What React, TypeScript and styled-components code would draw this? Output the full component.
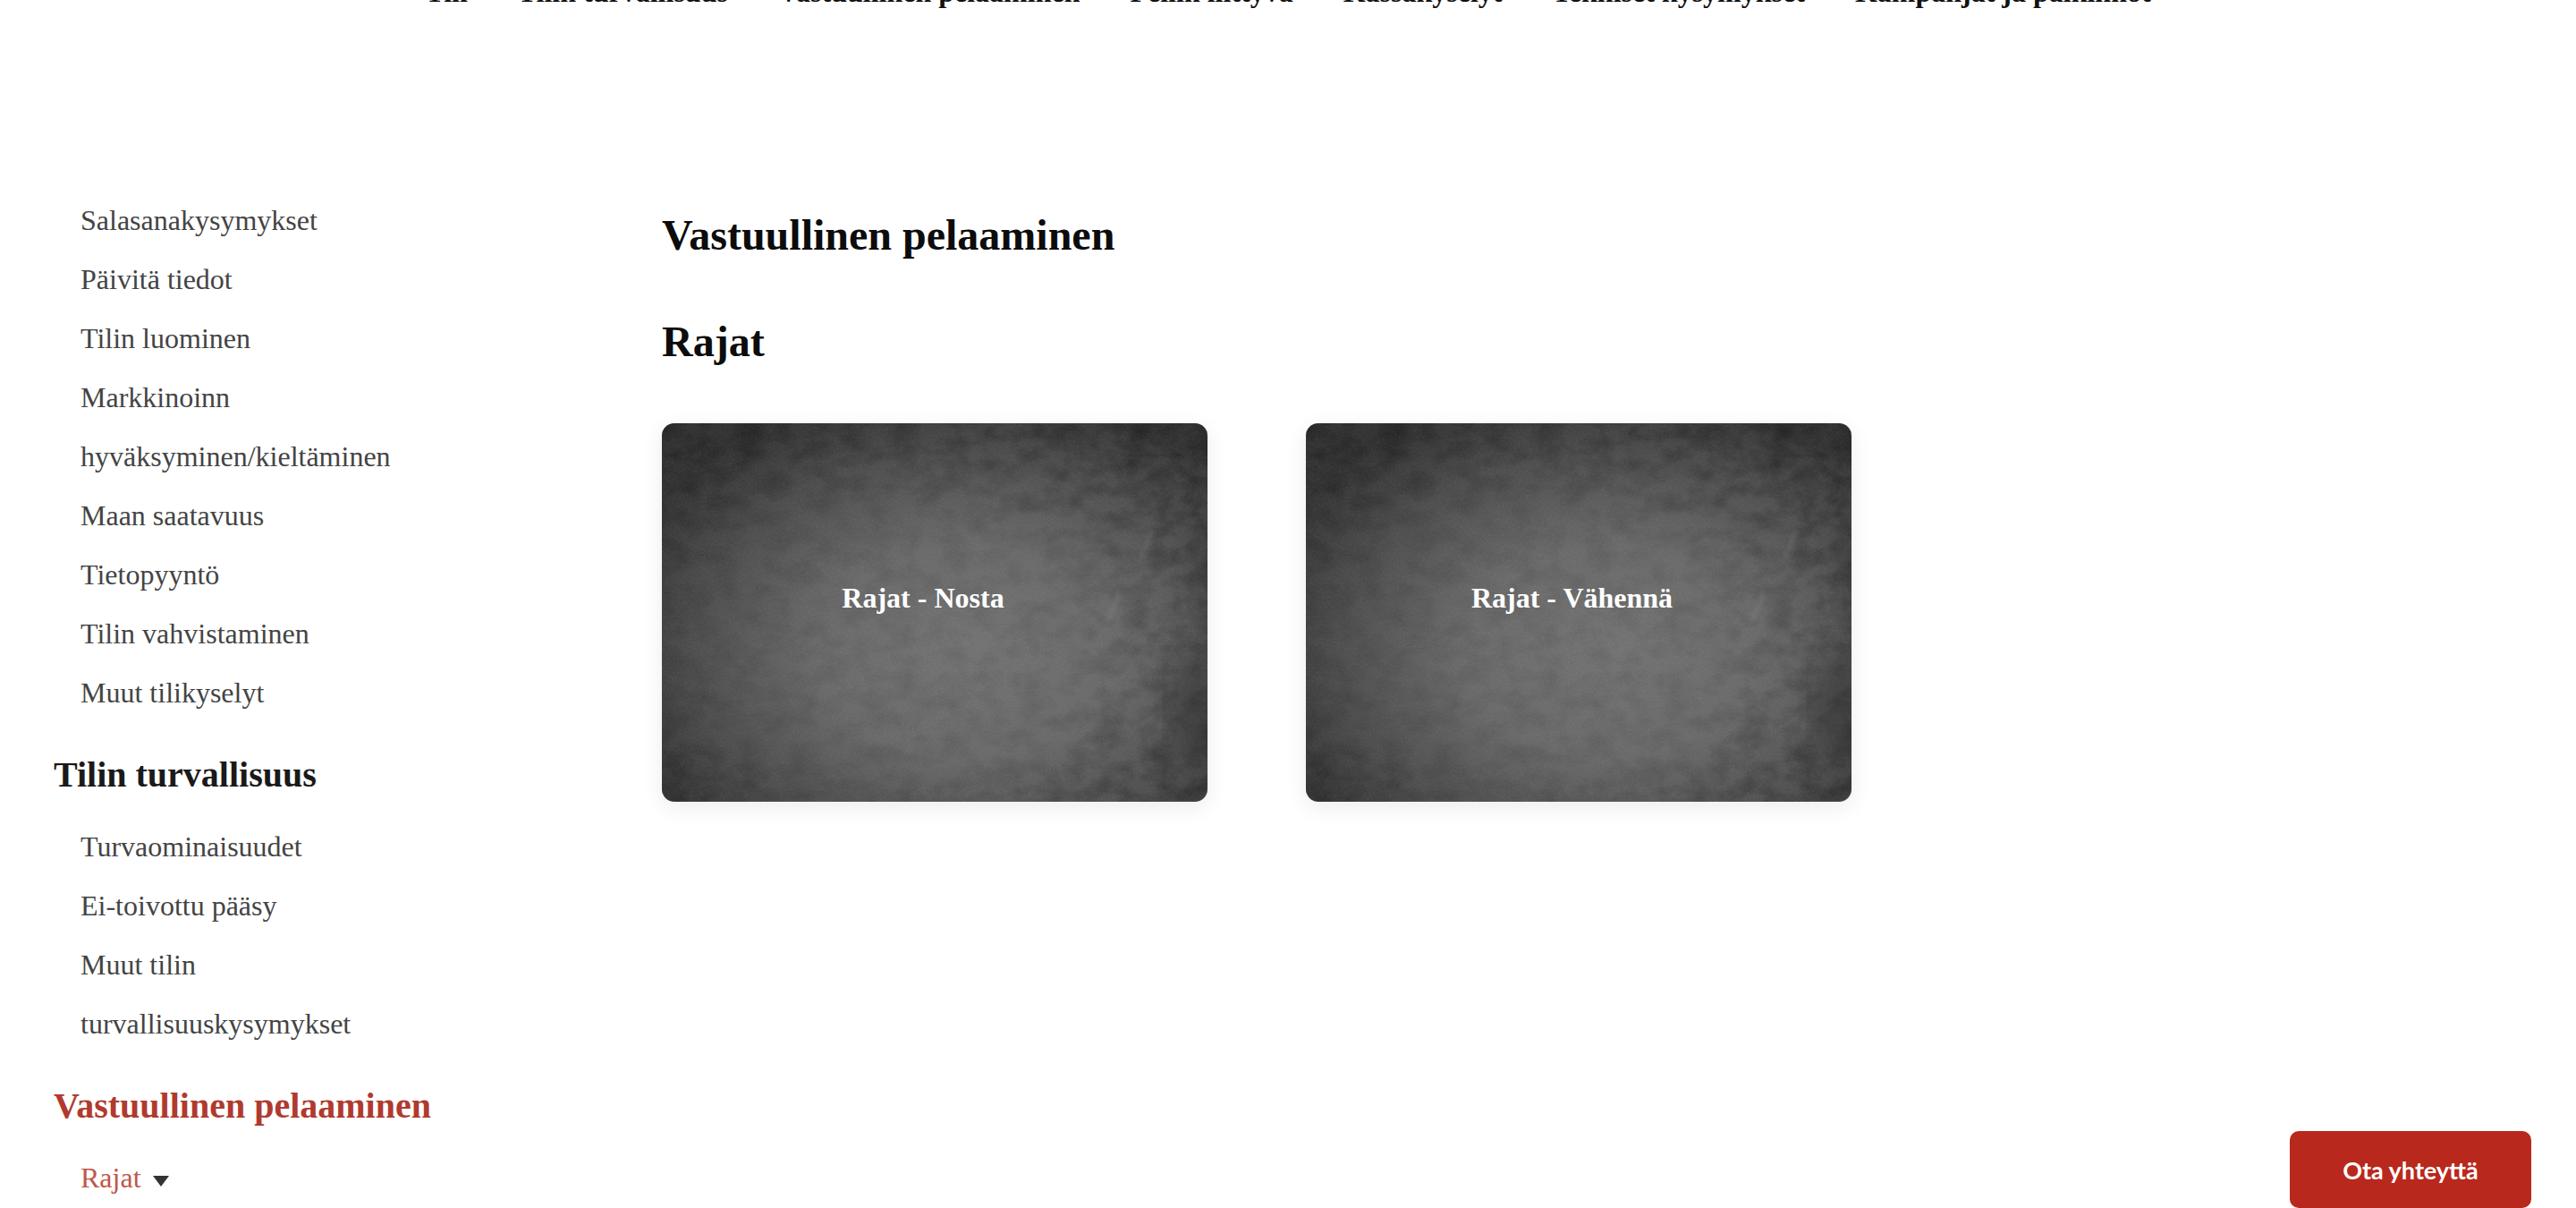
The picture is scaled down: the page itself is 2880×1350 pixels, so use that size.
import React from 'react';
import styled, { createGlobalStyle } from 'styled-components';

const navLinks = [
  'Tili',
  'Tilin turvallisuus',
  'Vastuullinen pelaaminen',
  'Peliin liittyvä',
  'Kassakyselyt',
  'Tekniset kysymykset',
  'Kampanjat ja palkinnot',
];

const accountLinks = [
  'Salasanakysymykset',
  'Päivitä tiedot',
  'Tilin luominen',
  'Markkinoinn hyväksyminen/kieltäminen',
  'Maan saatavuus',
  'Tietopyyntö',
  'Tilin vahvistaminen',
  'Muut tilikyselyt',
];

const securityLinks = ['Turvaominaisuudet', 'Ei-toivottu pääsy', 'Muut tilin turvallisuuskysymykset'];

const GlobalStyle = createGlobalStyle`
  html, body {
    margin: 0;
    padding: 0;
    background: #fff;
    overflow: hidden;
  }
  body {
    font-family: "Liberation Serif", "Times New Roman", serif;
  }
`;

const App: React.FC = () => (
  <Page>
    <GlobalStyle />
    <TopNav>
      {navLinks.map((link) => (
        <TopNavLink key={link}>{link}</TopNavLink>
      ))}
    </TopNav>
    <Content>
      <Sidebar>
        <SideList>
          {accountLinks.map((link) => (
            <SideItem key={link}>{link}</SideItem>
          ))}
        </SideList>
        <SideHeading>Tilin turvallisuus</SideHeading>
        <SideList>
          {securityLinks.map((link) => (
            <SideItem key={link}>{link}</SideItem>
          ))}
        </SideList>
        <SideHeading $active>Vastuullinen pelaaminen</SideHeading>
        <SideList>
          <SideItem $active>
            Rajat
            <Caret viewBox="0 0 20 14" aria-hidden="true">
              <path d="M1 1h18L10 13z" fill="#333" />
            </Caret>
          </SideItem>
        </SideList>
      </Sidebar>
      <Main>
        <Title>Vastuullinen pelaaminen</Title>
        <Subtitle>Rajat</Subtitle>
        <Cards>
          <Card $shift={26}>
            <Texture seed={4} />
            <CardLabel>Rajat - Nosta</CardLabel>
          </Card>
          <Card $shift={15}>
            <Texture seed={4} />
            <CardLabel>Rajat - Vähennä</CardLabel>
          </Card>
        </Cards>
      </Main>
    </Content>
    <ContactButton>Ota yhteyttä</ContactButton>
  </Page>
);

// mottled grey noise, heavier towards the worn top and right of the card photo
const Texture: React.FC<{ seed: number }> = ({ seed }) => (
  <TextureSvg viewBox="0 0 610 423" preserveAspectRatio="none" aria-hidden="true">
    <defs>
      <filter id={`mottle-${seed}`} x="0" y="0" width="100%" height="100%">
        <feTurbulence type="fractalNoise" baseFrequency="0.035 0.05" numOctaves="6" seed={seed} />
        <feColorMatrix values="0 0 0 0 0  0 0 0 0 0  0 0 0 0 0  1.6 0 0 0 -0.6" />
      </filter>
      <filter id={`grain-${seed}`} x="0" y="0" width="100%" height="100%">
        <feTurbulence type="fractalNoise" baseFrequency="0.45" numOctaves="3" seed={seed + 3} />
        <feColorMatrix values="0 0 0 0 1  0 0 0 0 1  0 0 0 0 1  0.9 0 0 0 -0.36" />
      </filter>
      <filter id={`soft-${seed}`}>
        <feGaussianBlur stdDeviation="14" />
      </filter>
      <filter id={`scratch-${seed}`}>
        <feGaussianBlur stdDeviation="2.5" />
      </filter>
      <radialGradient id={`edge-${seed}`} cx="40%" cy="58%" r="72%">
        <stop offset="50%" stopColor="#000" />
        <stop offset="100%" stopColor="#fff" />
      </radialGradient>
      <mask id={`edge-mask-${seed}`}>
        <rect width="610" height="423" fill={`url(#edge-${seed})`} />
      </mask>
    </defs>
    <rect width="610" height="423" filter={`url(#mottle-${seed})`} opacity="0.12" />
    <g mask={`url(#edge-mask-${seed})`}>
      <rect width="610" height="423" filter={`url(#mottle-${seed})`} opacity="0.32" />
    </g>
    <rect width="610" height="423" filter={`url(#grain-${seed})`} opacity="0.12" />
    <g fill="#2c2c2c" opacity="0.4" filter={`url(#soft-${seed})`}>
      <ellipse cx="600" cy="320" rx="34" ry="70" />
      <ellipse cx="610" cy="160" rx="14" ry="70" />
    </g>
    <g stroke="#8c8c8c" strokeWidth="5" fill="none" opacity="0.3" filter={`url(#scratch-${seed})`}>
      <path d="M512 190l-14 32" />
      <path d="M548 120l-12 30" />
    </g>
  </TextureSvg>
);

const Page = styled.div`
  height: 1350px;
  overflow: hidden;
`;

// the screenshot is scrolled, so only the feet of the nav labels show
const TopNav = styled.nav`
  display: flex;
  justify-content: center;
  gap: 56px;
  height: 37px;
  margin-top: -27px;
`;

const TopNavLink = styled.a`
  color: #111;
  font-size: 32px;
  font-weight: 700;
  line-height: 37px;
  white-space: nowrap;
`;

const Content = styled.div`
  display: grid;
  grid-template-columns: 740px 610px;
  padding-top: 203px;
`;

const Sidebar = styled.aside`
  padding-left: 60px;
`;

const SideList = styled.ul`
  list-style: none;
  margin: 0;
  padding: 0 0 0 30px;
  width: 420px;
`;

const SideItem = styled.li<{ $active?: boolean }>`
  color: ${(props) => (props.$active ? '#c0574c' : '#444')};
  font-size: 32px;
  line-height: 66px;
`;

const SideHeading = styled.h3<{ $active?: boolean }>`
  color: ${(props) => (props.$active ? '#b03a2e' : '#1a1a1a')};
  font-size: 40px;
  font-weight: 700;
  line-height: 46px;
  margin: 36px 0 24px;
  white-space: nowrap;
`;

const Caret = styled.svg`
  width: 20px;
  height: 14px;
  margin-left: 12px;
`;

const Main = styled.main`
  padding-top: 22px;
`;

const Title = styled.h1`
  color: #0c0c0c;
  font-size: 48px;
  font-weight: 700;
  line-height: 55px;
  margin: 0 0 64px;
  white-space: nowrap;
`;

const Subtitle = styled.h2`
  color: #0c0c0c;
  font-size: 48px;
  font-weight: 700;
  line-height: 55px;
  margin: 0 0 64px;
`;

const Cards = styled.div`
  display: flex;
  gap: 110px;
`;

const Card = styled.div<{ $shift: number }>`
  position: relative;
  flex: 0 0 610px;
  height: 423px;
  box-sizing: border-box;
  display: flex;
  align-items: center;
  justify-content: center;
  padding: 0 ${(props) => props.$shift}px 33px 0;
  border-radius: 14px;
  overflow: hidden;
  background:
    radial-gradient(ellipse 68% 70% at 56% 60%, #737373 0%, #6a6a6a 40%, #4e4e4e 74%, #333 100%);
  box-shadow: 0 6px 24px rgba(0, 0, 0, 0.08);
`;

const TextureSvg = styled.svg`
  position: absolute;
  inset: 0;
  width: 100%;
  height: 100%;
`;

const CardLabel = styled.span`
  position: relative;
  color: #fff;
  font-size: 32px;
  font-weight: 700;
`;

const ContactButton = styled.button`
  position: fixed;
  left: 2560px;
  top: 1264px;
  width: 270px;
  height: 86px;
  border: 0;
  border-radius: 10px;
  background: #b9281c;
  color: #fff;
  font-family: Lato, "Liberation Sans", sans-serif;
  font-size: 27px;
  font-weight: 700;
`;

export default App;
